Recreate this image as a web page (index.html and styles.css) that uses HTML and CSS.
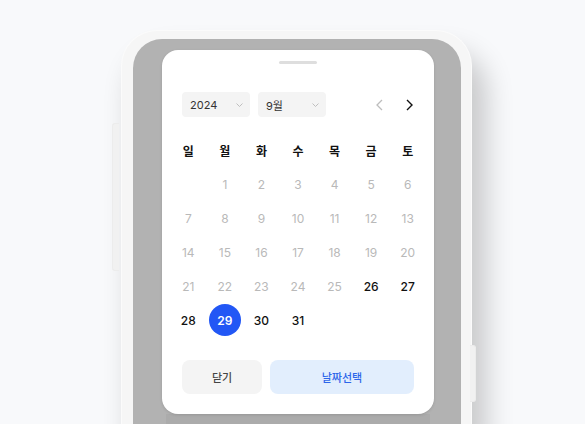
FILE: index.html
```html
<!DOCTYPE html>
<html lang="ko">
<head>
<meta charset="utf-8">
<link rel="stylesheet" href="styles.css">
</head>
<body>
<div class="stage">
  <div class="phone">
    <span class="btn-side btn-left"></span>
    <span class="btn-side btn-right"></span>
    <div class="screen">
      <div class="sheet">
        <div class="handle"></div>
        <div class="header">
          <div class="selects">
            <div class="select sel-year"><span>2024</span>
              <svg class="caret" width="7" height="4" viewBox="0 0 7 4"><polyline points="0.5,0.5 3.5,3.5 6.5,0.5" fill="none" stroke="#b9b9b9" stroke-width="0.9"/></svg>
            </div>
            <div class="select sel-month"><span>9월</span>
              <svg class="caret" width="7" height="4" viewBox="0 0 7 4"><polyline points="0.5,0.5 3.5,3.5 6.5,0.5" fill="none" stroke="#b9b9b9" stroke-width="0.9"/></svg>
            </div>
          </div>
          <div class="nav">
            <svg width="7" height="12" viewBox="0 0 7 12"><polyline points="6,1 1,6 6,11" fill="none" stroke="#bdbdbd" stroke-width="1.3"/></svg>
            <svg width="7" height="12" viewBox="0 0 7 12"><polyline points="1,1 6,6 1,11" fill="none" stroke="#111" stroke-width="1.4"/></svg>
          </div>
        </div>
        <div class="grid">
          <div class="wd">일</div><div class="wd">월</div><div class="wd">화</div><div class="wd">수</div><div class="wd">목</div><div class="wd">금</div><div class="wd">토</div>
          <div class="d"></div>
          <div class="d off">1</div><div class="d off">2</div><div class="d off">3</div><div class="d off">4</div><div class="d off">5</div><div class="d off">6</div>
          <div class="d off">7</div><div class="d off">8</div><div class="d off">9</div><div class="d off">10</div><div class="d off">11</div><div class="d off">12</div><div class="d off">13</div>
          <div class="d off">14</div><div class="d off">15</div><div class="d off">16</div><div class="d off">17</div><div class="d off">18</div><div class="d off">19</div><div class="d off">20</div>
          <div class="d off">21</div><div class="d off">22</div><div class="d off">23</div><div class="d off">24</div><div class="d off">25</div><div class="d on">26</div><div class="d on">27</div>
          <div class="d on">28</div><div class="d on"><span class="sel">29</span></div><div class="d on">30</div><div class="d on">31</div>
        </div>
        <div class="actions">
          <button class="btn btn-close">닫기</button>
          <button class="btn btn-ok">날짜선택</button>
        </div>
      </div>
      <div class="behind"></div>
    </div>
  </div>
</div>
</body>
</html>
```

FILE: styles.css
```css
* { box-sizing: border-box; }
html, body {
  margin: 0;
  padding: 0;
  width: 585px;
  height: 424px;
  overflow: hidden;
  background: #f8f9fb;
  font-family: "Inter", "Noto Sans CJK KR", sans-serif;
}
.stage {
  padding: 30px 0 0 121px;
}
.phone {
  position: relative;
  width: 351px;
  height: 394px;
  background: #f6f6f6;
  border: 1px solid #fbfbfb;
  border-bottom: none;
  border-radius: 36px 36px 0 0;
  padding: 8px 10px 0 11px;
  box-shadow: 12px 24px 28px 2px rgba(0, 0, 0, 0.2);
}
.btn-side {
  position: absolute;
  background: #f1f1f1;
  border: 1px solid #ececec;
}
.btn-left {
  left: -10px;
  top: 92px;
  width: 7px;
  height: 148px;
  border-radius: 3px 0 0 3px;
  border-right: none;
}
.btn-right {
  right: -5px;
  top: 314px;
  width: 6px;
  height: 57px;
  border-radius: 0 3px 3px 0;
  border-left: none;
}
.screen {
  background: #b2b2b2;
  border-radius: 29px 29px 0 0;
  height: 385px;
  padding: 11px 27px 0 29px;
  display: flex;
  flex-direction: column;
  align-items: center;
  overflow: hidden;
}
.sheet {
  width: 272px;
  flex-shrink: 0;
  background: #fff;
  border-radius: 16px;
  padding: 11px 20px 20px;
  box-shadow: 0 1px 3px rgba(0,0,0,0.12);
  position: relative;
  z-index: 1;
}
.behind {
  width: 264px;
  height: 10px;
  flex-shrink: 0;
  background: #ababab;
}
.handle {
  width: 38px;
  height: 3px;
  border-radius: 2px;
  background: #dedede;
  margin: 0 auto;
}
.header {
  margin-top: 28px;
  display: flex;
  justify-content: space-between;
  align-items: center;
}
.selects {
  display: flex;
  gap: 8px;
}
.select {
  width: 68px;
  height: 25px;
  background: #f4f4f4;
  border-radius: 4px;
  display: flex;
  align-items: center;
  justify-content: space-between;
  padding: 0 7px 0 8px;
  font-size: 11px;
  color: #333;
}
.caret { display: block; }
.nav {
  display: flex;
  gap: 23px;
  align-items: center;
  padding-right: 1px;
}
.nav svg { display: block; }
.grid {
  margin: 16px -12px 0;
  display: grid;
  grid-template-columns: repeat(7, 1fr);
  grid-auto-rows: 34px;
}
.wd, .d {
  display: flex;
  align-items: center;
  justify-content: center;
  font-size: 12px;
}
.wd {
  font-weight: 700;
  color: #111;
}
.d.off { color: #b9b9b9; }
.d.on { color: #111; font-weight: 500; }
.sel {
  width: 32px;
  height: 32px;
  border-radius: 50%;
  background: #2257f5;
  color: #fff;
  display: flex;
  align-items: center;
  justify-content: center;
  font-weight: 600;
}
.actions {
  margin-top: 23px;
  display: flex;
  gap: 8px;
}
.btn {
  height: 34px;
  border: none;
  border-radius: 8px;
  font-family: "Inter", "Noto Sans CJK KR", sans-serif;
  font-size: 11px;
  font-weight: 500;
  padding: 0;
}
.btn-close {
  width: 80px;
  background: #f4f4f4;
  color: #444;
}
.btn-ok {
  flex: 1;
  background: #e2eefd;
  color: #2d66ea;
}
```
